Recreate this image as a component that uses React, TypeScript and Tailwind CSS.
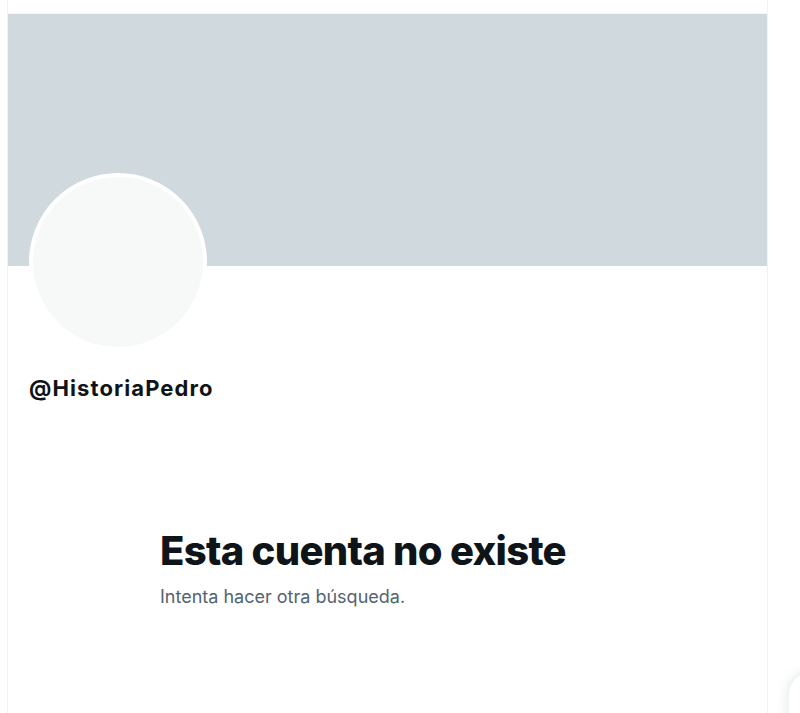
import React from "react";

export default function App() {
  return (
    <div
      className="relative h-[713px] w-[800px] overflow-hidden bg-white"
      style={{ fontFamily: "Inter, 'Liberation Sans', sans-serif" }}
    >
      <div className="ml-[7px] flex h-full w-[761px] flex-col border-x border-[#eff3f4]">
        <div className="h-[14px] border-b border-[#f3f6f7] bg-white" />
        <div className="h-[252px] bg-[#cfd9de]" />
        <div className="ml-[21px] -mt-[93px] h-[178px] w-[178px] rounded-full border-[4px] border-white bg-[#f7f9f9]" />
        <div className="ml-[21px] mt-[25px] text-[22px] font-bold leading-[24px] tracking-[1.1px] text-[#0f1419]">
          @HistoriaPedro
        </div>
        <div className="ml-[152px] mt-[127px] w-[455px]">
          <div className="text-[40px] font-extrabold leading-[48px] tracking-[-0.7px] text-[#0f1419]">
            Esta cuenta no existe
          </div>
          <div className="mt-[10px] text-[18px] leading-[24px] text-[#536471]">
            Intenta hacer otra búsqueda.
          </div>
        </div>
      </div>
      <div className="absolute left-[788px] top-[672px] h-[120px] w-[120px] rounded-[22px] border border-[#eff3f4] bg-white shadow-[0_0_12px_rgba(101,119,134,0.2)]" />
    </div>
  );
}
